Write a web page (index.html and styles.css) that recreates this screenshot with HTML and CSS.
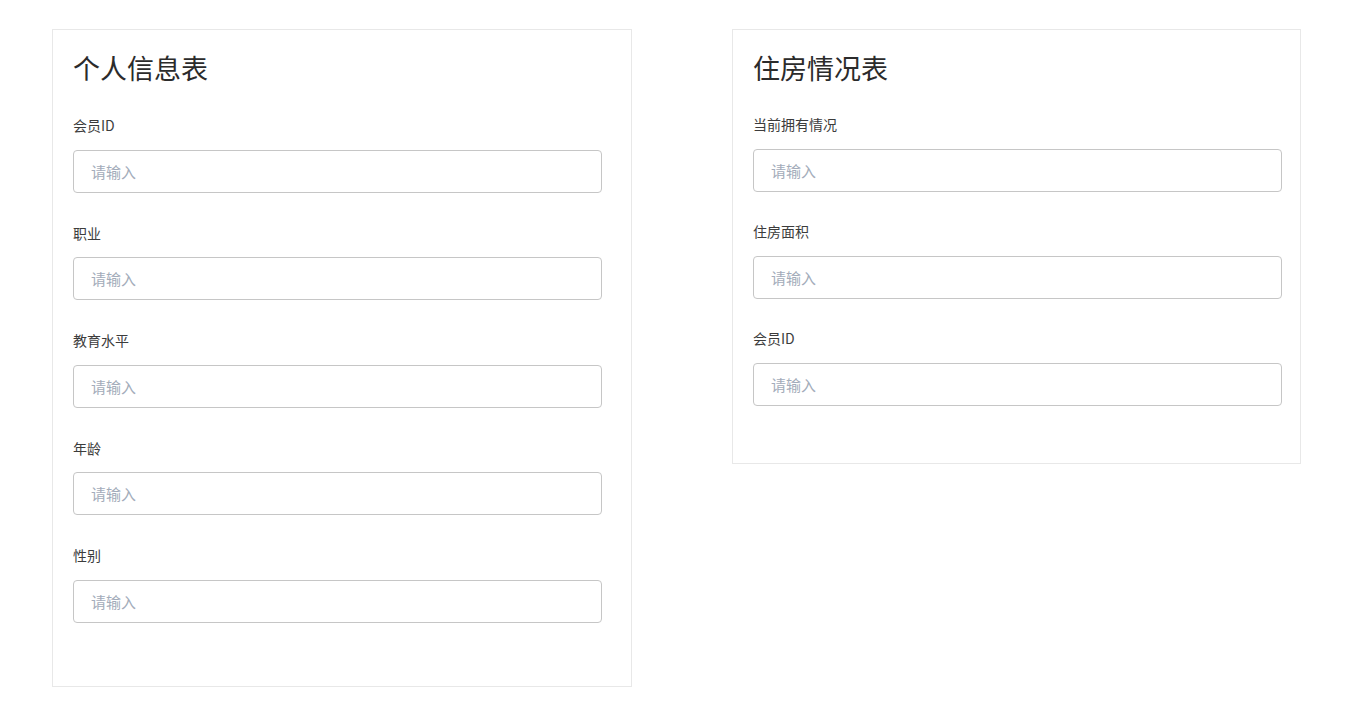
FILE: index.html
```html
<!DOCTYPE html>
<html>
<head>
	<meta charset="utf-8">
	<meta name="viewport" content="width=device-width, initial-scale=1">
	<title>表单</title>
	<link rel="stylesheet" href="styles.css">
</head>
<body>
	<div class="page">
		<form class="card card-person">
			<h1 class="card-title">个人信息表</h1>
			<div class="field">
				<label class="field-label">会员ID</label>
				<input class="field-input" type="text" placeholder="请输入">
			</div>
			<div class="field">
				<label class="field-label">职业</label>
				<input class="field-input" type="text" placeholder="请输入">
			</div>
			<div class="field">
				<label class="field-label">教育水平</label>
				<input class="field-input" type="text" placeholder="请输入">
			</div>
			<div class="field">
				<label class="field-label">年龄</label>
				<input class="field-input" type="text" placeholder="请输入">
			</div>
			<div class="field">
				<label class="field-label">性别</label>
				<input class="field-input" type="text" placeholder="请输入">
			</div>
		</form>

		<form class="card card-house">
			<h1 class="card-title">住房情况表</h1>
			<div class="field">
				<label class="field-label">当前拥有情况</label>
				<input class="field-input" type="text" placeholder="请输入">
			</div>
			<div class="field">
				<label class="field-label">住房面积</label>
				<input class="field-input" type="text" placeholder="请输入">
			</div>
			<div class="field">
				<label class="field-label">会员ID</label>
				<input class="field-input" type="text" placeholder="请输入">
			</div>
		</form>
	</div>
</body>
</html>
```

FILE: styles.css
```css
body{
	margin: 0px;
	padding: 0px;
	background: #ffffff;
	font-family: "Noto Sans CJK SC", "Noto Sans", sans-serif;
	color: #333;
}

.page{
	display: flex;
	align-items: flex-start;
	gap: 100px;
	padding: 29px 0px 0px 52px;
}

.card{
	display: flex;
	flex-direction: column;
	gap: 30px;
	box-sizing: border-box;
	border: 1px solid #e8e8e8;
	background: #fff;
	padding: 18px 20px 0px 20px;
	margin: 0px;
}

.card-person{
	width: 580px;
	padding-right: 29px;
	padding-bottom: 63px;
}

.card-house{
	width: 569px;
	gap: 29.5px;
	padding-right: 18px;
	padding-bottom: 57px;
}

.card-title{
	margin: 0px 0px 0px 0px;
	font-size: 27px;
	font-weight: normal;
	line-height: 39px;
	color: #2b2b2b;
}

.card-person .card-title{
	margin-bottom: -2px;
}

.card-house .card-title{
	margin-bottom: -2.5px;
}

.field{
	display: flex;
	flex-direction: column;
	gap: 14.5px;
}

.field-label{
	font-size: 14px;
	line-height: 20px;
	color: #3c3c3c;
}

.field-input{
	box-sizing: border-box;
	width: 100%;
	height: 43px;
	margin: 0px;
	padding: 0px 17px;
	border: 1px solid #c6c6c6;
	border-radius: 4px;
	font-family: inherit;
	font-size: 15px;
	color: #333;
	background: #fff;
	outline: none;
}

.field-input::placeholder{
	color: #a3acba;
}
```
